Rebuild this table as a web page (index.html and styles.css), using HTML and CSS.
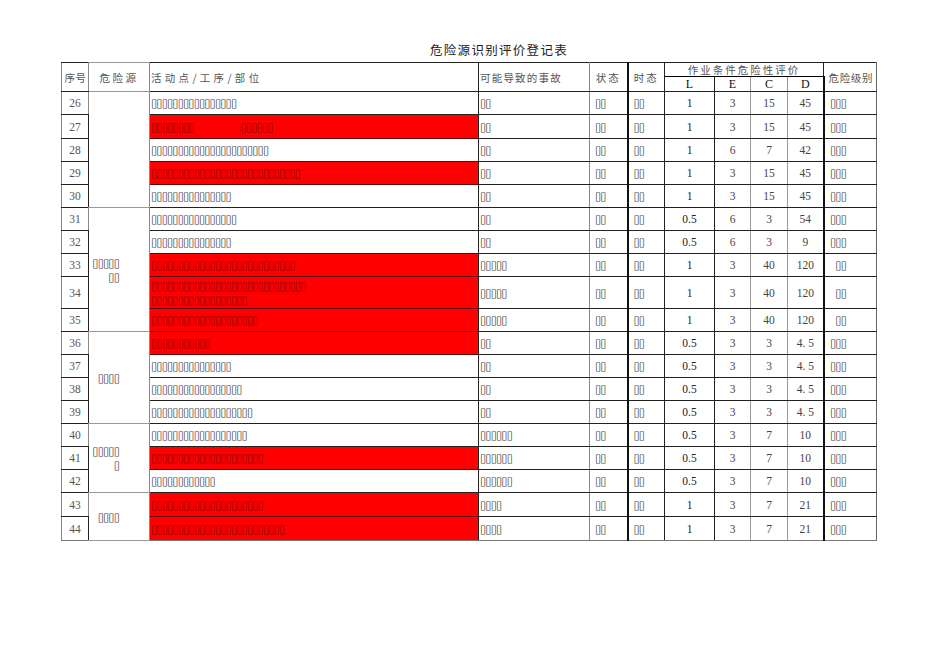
FILE: index.html
```html
<!DOCTYPE html>
<html lang="zh">
<head>
<meta charset="utf-8">
<title>危险源识别评价登记表</title>
<link rel="stylesheet" href="styles.css">
</head>
<body>
<div class="page">
  <h1 class="title">危险源识别评价登记表</h1>
  <table class="sheet">
    <colgroup>
      <col class="w-seq"><col class="w-haz"><col class="w-act"><col class="w-acc"><col class="w-st"><col class="w-tm"><col class="w-l"><col class="w-e"><col class="w-c"><col class="w-d"><col class="w-lv">
    </colgroup>
    <thead>
      <tr class="h1">
        <th rowspan="2" class="c-seq">序号</th>
        <th rowspan="2" class="c-haz">危险源</th>
        <th rowspan="2" class="c-act hl wide">活动点/工序/部位</th>
        <th rowspan="2" class="c-acc hl">可能导致的事故</th>
        <th rowspan="2" class="c-st">状态</th>
        <th rowspan="2" class="c-tm">时态</th>
        <th colspan="4" class="c-eval">作业条件危险性评价</th>
        <th rowspan="2" class="c-lv">危险级别</th>
      </tr>
      <tr class="h2">
        <th class="c-l">L</th><th class="c-e">E</th><th class="c-c">C</th><th class="c-d">D</th>
      </tr>
    </thead>
    <tbody>
      <tr class="r23"><td class="c-seq">26</td><td class="c-haz" rowspan="5"></td><td class="c-act t">▯▯▯▯▯▯▯▯▯▯▯▯▯▯▯▯</td><td class="c-acc t">▯▯</td><td class="c-st t">▯▯</td><td class="c-tm t">▯▯</td><td class="c-l">1</td><td class="c-e">3</td><td class="c-c">15</td><td class="c-d">45</td><td class="c-lv t">▯▯▯</td></tr>
      <tr class="r24"><td class="c-seq">27</td><td class="c-act t red">▯▯▯▯▯▯▯▯<span class="gap"></span>.▯▯▯▯▯▯</td><td class="c-acc t">▯▯</td><td class="c-st t">▯▯</td><td class="c-tm t">▯▯</td><td class="c-l">1</td><td class="c-e">3</td><td class="c-c">15</td><td class="c-d">45</td><td class="c-lv t">▯▯▯</td></tr>
      <tr class="r23"><td class="c-seq">28</td><td class="c-act t">▯▯▯▯▯▯▯▯▯▯▯▯▯▯▯▯▯▯▯▯▯▯</td><td class="c-acc t">▯▯</td><td class="c-st t">▯▯</td><td class="c-tm t">▯▯</td><td class="c-l">1</td><td class="c-e">6</td><td class="c-c">7</td><td class="c-d">42</td><td class="c-lv t">▯▯▯</td></tr>
      <tr class="r23"><td class="c-seq">29</td><td class="c-act t red">▯▯▯▯▯▯▯▯▯▯▯▯▯▯▯▯▯▯▯▯▯▯▯▯▯▯▯▯</td><td class="c-acc t">▯▯</td><td class="c-st t">▯▯</td><td class="c-tm t">▯▯</td><td class="c-l">1</td><td class="c-e">3</td><td class="c-c">15</td><td class="c-d">45</td><td class="c-lv t">▯▯▯</td></tr>
      <tr class="r23"><td class="c-seq">30</td><td class="c-act t">▯▯▯▯▯▯▯▯▯▯▯▯▯▯▯</td><td class="c-acc t">▯▯</td><td class="c-st t">▯▯</td><td class="c-tm t">▯▯</td><td class="c-l">1</td><td class="c-e">3</td><td class="c-c">15</td><td class="c-d">45</td><td class="c-lv t">▯▯▯</td></tr>
      <tr class="r23"><td class="c-seq">31</td><td class="c-haz t" rowspan="5"><div class="haz">▯▯▯▯▯<br>▯▯</div></td><td class="c-act t">▯▯▯▯▯▯▯▯▯▯▯▯▯▯▯▯</td><td class="c-acc t">▯▯</td><td class="c-st t">▯▯</td><td class="c-tm t">▯▯</td><td class="c-l">0.5</td><td class="c-e">6</td><td class="c-c">3</td><td class="c-d">54</td><td class="c-lv t">▯▯▯</td></tr>
      <tr class="r23"><td class="c-seq">32</td><td class="c-act t">▯▯▯▯▯▯▯▯▯▯▯▯▯▯▯</td><td class="c-acc t">▯▯</td><td class="c-st t">▯▯</td><td class="c-tm t">▯▯</td><td class="c-l">0.5</td><td class="c-e">6</td><td class="c-c">3</td><td class="c-d">9</td><td class="c-lv t">▯▯▯</td></tr>
      <tr class="r23"><td class="c-seq">33</td><td class="c-act t red">▯▯▯▯▯▯▯▯▯▯▯▯▯▯▯▯▯▯▯▯▯▯▯▯▯▯▯</td><td class="c-acc t">▯▯▯▯▯</td><td class="c-st t">▯▯</td><td class="c-tm t">▯▯</td><td class="c-l">1</td><td class="c-e">3</td><td class="c-c">40</td><td class="c-d">120</td><td class="c-lv t">▯▯</td></tr>
      <tr class="r32"><td class="c-seq">34</td><td class="c-act t red two">▯▯▯▯▯▯▯▯▯▯▯▯▯▯▯▯▯▯▯▯▯▯▯▯▯▯▯▯▯<br>▯▯▯▯▯▯▯▯▯▯▯▯▯▯▯▯▯▯</td><td class="c-acc t">▯▯▯▯▯</td><td class="c-st t">▯▯</td><td class="c-tm t">▯▯</td><td class="c-l">1</td><td class="c-e">3</td><td class="c-c">40</td><td class="c-d">120</td><td class="c-lv t">▯▯</td></tr>
      <tr class="r23"><td class="c-seq">35</td><td class="c-act t red">▯▯▯▯▯▯▯▯▯▯▯▯▯▯▯▯▯▯▯▯</td><td class="c-acc t">▯▯▯▯▯</td><td class="c-st t">▯▯</td><td class="c-tm t">▯▯</td><td class="c-l">1</td><td class="c-e">3</td><td class="c-c">40</td><td class="c-d">120</td><td class="c-lv t">▯▯</td></tr>
      <tr class="r23"><td class="c-seq">36</td><td class="c-haz t" rowspan="4"><div class="haz">▯▯▯▯</div></td><td class="c-act t red">▯▯▯▯▯▯▯▯▯▯▯</td><td class="c-acc t">▯▯</td><td class="c-st t">▯▯</td><td class="c-tm t">▯▯</td><td class="c-l">0.5</td><td class="c-e">3</td><td class="c-c">3</td><td class="c-d">4. 5</td><td class="c-lv t">▯▯▯</td></tr>
      <tr class="r23"><td class="c-seq">37</td><td class="c-act t">▯▯▯▯▯▯▯▯▯▯▯▯▯▯▯</td><td class="c-acc t">▯▯</td><td class="c-st t">▯▯</td><td class="c-tm t">▯▯</td><td class="c-l">0.5</td><td class="c-e">3</td><td class="c-c">3</td><td class="c-d">4. 5</td><td class="c-lv t">▯▯▯</td></tr>
      <tr class="r23"><td class="c-seq">38</td><td class="c-act t">▯▯▯▯▯▯▯▯▯▯▯▯▯▯▯▯▯</td><td class="c-acc t">▯▯</td><td class="c-st t">▯▯</td><td class="c-tm t">▯▯</td><td class="c-l">0.5</td><td class="c-e">3</td><td class="c-c">3</td><td class="c-d">4. 5</td><td class="c-lv t">▯▯▯</td></tr>
      <tr class="r23"><td class="c-seq">39</td><td class="c-act t">▯▯▯▯▯▯▯▯▯▯▯▯▯▯▯▯▯▯▯</td><td class="c-acc t">▯▯</td><td class="c-st t">▯▯</td><td class="c-tm t">▯▯</td><td class="c-l">0.5</td><td class="c-e">3</td><td class="c-c">3</td><td class="c-d">4. 5</td><td class="c-lv t">▯▯▯</td></tr>
      <tr class="r23"><td class="c-seq">40</td><td class="c-haz t" rowspan="3"><div class="haz">▯▯▯▯▯<br>▯</div></td><td class="c-act t">▯▯▯▯▯▯▯▯▯▯▯▯▯▯▯▯▯▯</td><td class="c-acc t">▯▯▯▯▯▯</td><td class="c-st t">▯▯</td><td class="c-tm t">▯▯</td><td class="c-l">0.5</td><td class="c-e">3</td><td class="c-c">7</td><td class="c-d">10</td><td class="c-lv t">▯▯▯</td></tr>
      <tr class="r23"><td class="c-seq">41</td><td class="c-act t red">▯▯▯▯▯▯▯▯▯▯▯▯▯▯▯▯▯▯▯▯▯</td><td class="c-acc t">▯▯▯▯▯▯</td><td class="c-st t">▯▯</td><td class="c-tm t">▯▯</td><td class="c-l">0.5</td><td class="c-e">3</td><td class="c-c">7</td><td class="c-d">10</td><td class="c-lv t">▯▯▯</td></tr>
      <tr class="r23"><td class="c-seq">42</td><td class="c-act t">▯▯▯▯▯▯▯▯▯▯▯▯</td><td class="c-acc t">▯▯▯▯▯▯</td><td class="c-st t">▯▯</td><td class="c-tm t">▯▯</td><td class="c-l">0.5</td><td class="c-e">3</td><td class="c-c">7</td><td class="c-d">10</td><td class="c-lv t">▯▯▯</td></tr>
      <tr class="r24 grp"><td class="c-seq">43</td><td class="c-haz t" rowspan="2"><div class="haz">▯▯▯▯</div></td><td class="c-act t red">▯▯▯▯▯▯▯▯▯▯▯▯▯▯▯▯▯▯▯▯▯</td><td class="c-acc t">▯▯▯▯</td><td class="c-st t">▯▯</td><td class="c-tm t">▯▯</td><td class="c-l">1</td><td class="c-e">3</td><td class="c-c">7</td><td class="c-d">21</td><td class="c-lv t">▯▯▯</td></tr>
      <tr class="r24 last"><td class="c-seq">44</td><td class="c-act t red">▯▯▯▯▯▯▯▯▯▯▯▯▯▯▯▯▯▯▯▯▯▯▯▯▯</td><td class="c-acc t">▯▯▯▯</td><td class="c-st t">▯▯</td><td class="c-tm t">▯▯</td><td class="c-l">1</td><td class="c-e">3</td><td class="c-c">7</td><td class="c-d">21</td><td class="c-lv t">▯▯▯</td></tr>
    </tbody>
  </table>
</div>
</body>
</html>
```

FILE: styles.css
```css
html, body {
  margin: 0;
  padding: 0;
  background: #ffffff;
}

.page {
  padding: 41px 0 0 61px;
  font-family: "Noto Sans CJK SC", "DejaVu Sans", sans-serif;
  color: #333;
}

.title {
  margin: 0 0 3px 369px;
  height: 18px;
  font-size: 12.5px;
  font-weight: normal;
  letter-spacing: 1.3px;
  line-height: 18px;
  color: #222;
}

.sheet {
  border-collapse: collapse;
  table-layout: fixed;
  width: 815px;
  border: 1px solid #777;
}

.w-seq { width: 27px; }
.w-haz { width: 61px; }
.w-act { width: 329px; }
.w-acc { width: 111px; }
.w-st  { width: 38px; }
.w-tm  { width: 37px; }
.w-l   { width: 50px; }
.w-e   { width: 36px; }
.w-c   { width: 37px; }
.w-d   { width: 36px; }
.w-lv  { width: 53px; }

.sheet th,
.sheet td {
  border: 1px solid #222;
  padding: 0;
  overflow: hidden;
  white-space: nowrap;
}

.sheet th {
  font-weight: normal;
  font-size: 10.5px;
  letter-spacing: 1.2px;
  color: #555;
  text-align: center;
  line-height: 13px;
}

.h1 { height: 14px; }
.h2 { height: 15px; }

.h1 th.hl {
  text-align: left;
  padding-left: 1px;
  vertical-align: middle;
}

.h1 th.wide { letter-spacing: 3.3px; }

.h1 th.c-seq { padding-left: 1px; letter-spacing: 0.6px; }
.h1 th.c-haz { letter-spacing: 2.5px; }
.h1 th.c-st,
.h1 th.c-tm { letter-spacing: 2px; }

.h1 th.c-eval {
  font-size: 10.5px;
  letter-spacing: 2px;
  line-height: 12px;
  vertical-align: bottom;
  border-bottom: 1px solid #000;
}

.h1 th.c-lv { letter-spacing: 0.6px; text-align: right; padding-right: 3px; }

.h2 th {
  font-family: "Liberation Serif", "DejaVu Serif", serif;
  font-size: 12px;
  letter-spacing: 0;
  color: #111;
}

.r23 { height: 23px; }
.r24 { height: 24px; }
.r32 { height: 32px; }

.sheet td {
  font-family: "Liberation Serif", "DejaVu Serif", serif;
  font-size: 11.5px;
  color: #444;
  text-align: center;
  vertical-align: middle;
}

/* vertical rules */
.sheet .c-seq { border-left-color: #888; border-right-color: #888; }
.sheet .c-haz { border-right-color: #888; border-top-color: #999; border-bottom-color: #999; }
.sheet .c-acc { border-right-color: #888; }
.sheet .c-st  { border-left-color: #888; border-right: 2px solid #111; }
.sheet .c-e   { border-right-color: #999; }
.sheet .c-c   { border-right-color: #999; }
.sheet .c-d   { border-right: 2px solid #111; }
.sheet .c-lv  { border-right-color: #666; }
.sheet td.c-seq { color: #555; }
.sheet td.c-l { color: #222; }

.sheet tr.grp td { border-top-color: #000; }
.sheet tr.last td { border-bottom-color: #777; }

/* placeholder glyph boxes */
.t {
  font-family: "DejaVu Sans", sans-serif;
  font-size: 9.1px;
  color: #808080;
  letter-spacing: -1px;
}

.sheet td.c-act,
.sheet td.c-acc {
  text-align: left;
  padding-left: 1px;
}

.sheet td.c-st,
.sheet td.c-tm {
  text-align: left;
  padding-left: 5px;
}

.sheet td.c-lv {
  text-align: right;
  padding-right: 30px;
}

.sheet td.red {
  background: #ff0000;
  color: #8a0000;
  border-top-color: #5a0000;
  border-bottom-color: #5a0000;
}

.two { line-height: 14px; }

.gap {
  display: inline-block;
  width: 45px;
}

.sheet td.c-haz {
  text-align: left;
  vertical-align: middle;
  padding-left: 2px;
}

.haz {
  width: 28px;
  text-align: right;
  line-height: 14px;
}
```
